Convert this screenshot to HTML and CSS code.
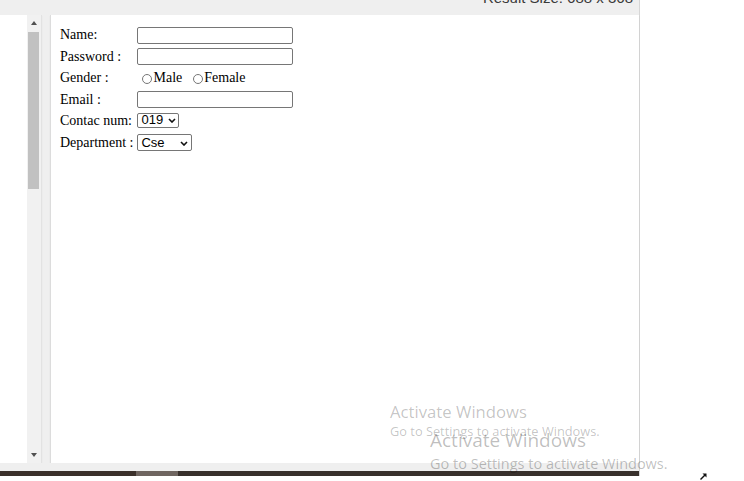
FILE: index.html
```html
<!DOCTYPE html>
<html>
<head>
<meta charset="utf-8">
<link rel="stylesheet" href="styles.css">
</head>
<body>
<div class="screen">
  <div class="window">
    <div class="topbar"><span class="result-size">Result Size: 688 x 368</span></div>
    <div class="panes">
      <div class="editor">
        <div class="editor-body"></div>
        <div class="scrollbar">
          <div class="sb-btn"><span class="arrow up"></span></div>
          <div class="track"><div class="thumb"></div></div>
          <div class="sb-btn"><span class="arrow down"></span></div>
        </div>
      </div>
      <div class="result">
        <form class="form">
          <label class="lbl">Name:</label>
          <div class="cell"><input class="text" type="text"></div>
          <label class="lbl">Password :</label>
          <div class="cell"><input class="text" type="password"></div>
          <label class="lbl">Gender :</label>
          <div class="cell radios">
            <input class="radio first" type="radio" name="g"><span>Male</span>
            <input class="radio second" type="radio" name="g"><span>Female</span>
          </div>
          <label class="lbl">Email :</label>
          <div class="cell"><input class="text" type="email"></div>
          <label class="lbl">Contac num:</label>
          <div class="cell">
            <span class="sel-wrap num">
              <select class="sel"><option>019</option></select>
              <svg class="chev" width="8" height="5" viewBox="0 0 8 5"><path d="M1 1 L4 4 L7 1" fill="none" stroke="#111" stroke-width="1.6"/></svg>
            </span>
          </div>
          <label class="lbl">Department :</label>
          <div class="cell">
            <span class="sel-wrap dept">
              <select class="sel"><option>Cse</option></select>
              <svg class="chev" width="8" height="5" viewBox="0 0 8 5"><path d="M1 1 L4 4 L7 1" fill="none" stroke="#111" stroke-width="1.6"/></svg>
            </span>
          </div>
        </form>
      </div>
    </div>
    <div class="bottom-gap"></div>
    <div class="taskbar"><span class="seg seg-a"></span><span class="seg seg-b"></span><span class="seg seg-c"></span></div>
  </div>
  <div class="watermark wm1">
    <div class="wm-title">Activate Windows</div>
    <div class="wm-sub">Go to Settings to activate Windows.</div>
  </div>
  <div class="watermark wm2">
    <div class="wm-title">Activate Windows</div>
    <div class="wm-sub">Go to Settings to activate Windows.</div>
  </div>
  <svg class="corner-arrow" width="9" height="9" viewBox="0 0 9 9">
    <path d="M1.5 7.5 L6.5 2.5" stroke="#111" stroke-width="1.4" fill="none"/>
    <path d="M3.5 1.5 H7.5 V5.5 Z" fill="#111"/>
  </svg>
</div>
</body>
</html>
```
FILE: styles.css
```css
html, body {
  margin: 0;
  padding: 0;
  background: #ffffff;
}

.screen {
  position: relative;
  width: 744px;
  height: 481px;
  overflow: hidden;
  display: flex;
  background: #ffffff;
}

.window {
  width: 639px;
  border-right: 1px solid #d6d6d6;
  height: 476px;
  display: flex;
  flex-direction: column;
  background: #efefef;
}

.topbar {
  height: 15px;
  flex: none;
  overflow: hidden;
  display: flex;
  justify-content: flex-end;
  align-items: flex-start;
  padding-right: 6px;
  background: #efefef;
}

.result-size {
  font-family: "Liberation Sans", Arial, sans-serif;
  font-size: 15px;
  line-height: 15px;
  color: #3a3a3a;
  margin-top: -10px;
  white-space: nowrap;
}

.panes {
  height: 448px;
  flex: none;
  display: flex;
  gap: 8px;
}

.editor {
  width: 41px;
  display: flex;
  background: #ffffff;
  border-right: 1px solid #e2e2e2;
  box-shadow: 0 1px 1px rgba(0,0,0,0.08);
}

.editor-body {
  width: 27px;
  background: #ffffff;
}

.scrollbar {
  width: 14px;
  background: #f1f1f1;
  display: flex;
  flex-direction: column;
}

.sb-btn {
  height: 16px;
  flex: none;
  display: flex;
  align-items: center;
  justify-content: center;
}

.arrow {
  width: 0;
  height: 0;
  border-left: 3px solid transparent;
  border-right: 3px solid transparent;
}

.arrow.up {
  border-bottom: 4px solid #505050;
}

.arrow.down {
  border-top: 4px solid #505050;
}

.track {
  flex: 1;
  padding: 1px 2px 0 1px;
}

.thumb {
  height: 157px;
  background: #c1c1c1;
}

.result {
  flex: 1;
  background: #ffffff;
  border-left: 1px solid #dcdcdc;
  box-shadow: 0 1px 1px rgba(0,0,0,0.1);
  padding: 8px;
}

.form {
  display: grid;
  grid-template-columns: max-content max-content;
  grid-auto-rows: 20px;
  column-gap: 2px;
  row-gap: 1.5px;
  padding: 2px 2px 2px 0;
  align-items: center;
  font-family: "Liberation Serif", "Times New Roman", serif;
  font-size: 14px;
  color: #000;
}

.lbl {
  padding: 0 1px;
  line-height: 16px;
  white-space: nowrap;
}

.cell {
  padding: 0 1px;
  display: flex;
  align-items: center;
}

.text {
  width: 156px;
  height: 17px;
  box-sizing: border-box;
  margin: 0;
  border: 1px solid #767676;
  border-radius: 2px;
  padding: 0 2px;
  background: #fff;
}

.radios {
  line-height: 16px;
}

.radio {
  width: 10px;
  height: 10px;
  margin: 1px 1px 0 5px;
  accent-color: #767676;
}

.radio.second {
  margin-left: 11px;
}

.sel-wrap {
  position: relative;
  display: inline-flex;
}

.sel {
  appearance: none;
  -webkit-appearance: none;
  box-sizing: border-box;
  margin: 0;
  padding: 0 0 0 3px;
  border: 1px solid #767676;
  border-radius: 2px;
  background: #fff;
  color: #000;
  font-family: "Liberation Sans", Arial, sans-serif;
  font-size: 13px;
  line-height: 12px;
}

.sel-wrap.num {
  margin-top: -2px;
}

.sel-wrap.num .sel {
  width: 42px;
  height: 15px;
}

.sel-wrap.dept .sel {
  width: 55px;
  height: 17px;
}

.chev {
  position: absolute;
  top: 50%;
  margin-top: -2px;
  pointer-events: none;
}

.sel-wrap.num .chev {
  left: 31px;
}

.sel-wrap.dept .chev {
  left: 43px;
}

.bottom-gap {
  height: 8px;
  flex: none;
  background: #efefef;
}

.taskbar {
  height: 5px;
  flex: none;
  display: flex;
}

.seg-a {
  width: 136px;
  background: #3b302b;
}

.seg-b {
  width: 42px;
  background: #6f6560;
}

.seg-c {
  flex: 1;
  background: #38302c;
}

.watermark {
  position: absolute;
  font-family: "Open Sans", "Noto Sans", sans-serif;
  color: rgba(0, 0, 0, 0.24);
  white-space: nowrap;
  pointer-events: none;
}

.wm1 {
  left: 390px;
  top: 402px;
}

.wm1 .wm-title {
  font-size: 16.7px;
  line-height: 20px;
}

.wm1 .wm-sub {
  font-size: 12.8px;
  line-height: 15px;
  margin-top: 2px;
}

.wm2 {
  left: 430px;
  top: 429px;
  color: rgba(0, 0, 0, 0.26);
}

.wm2 .wm-title {
  font-size: 19px;
  line-height: 22px;
}

.wm2 .wm-sub {
  font-size: 14.5px;
  line-height: 17px;
  margin-top: 4px;
}

.corner-arrow {
  position: absolute;
  left: 699px;
  top: 472px;
}
```
